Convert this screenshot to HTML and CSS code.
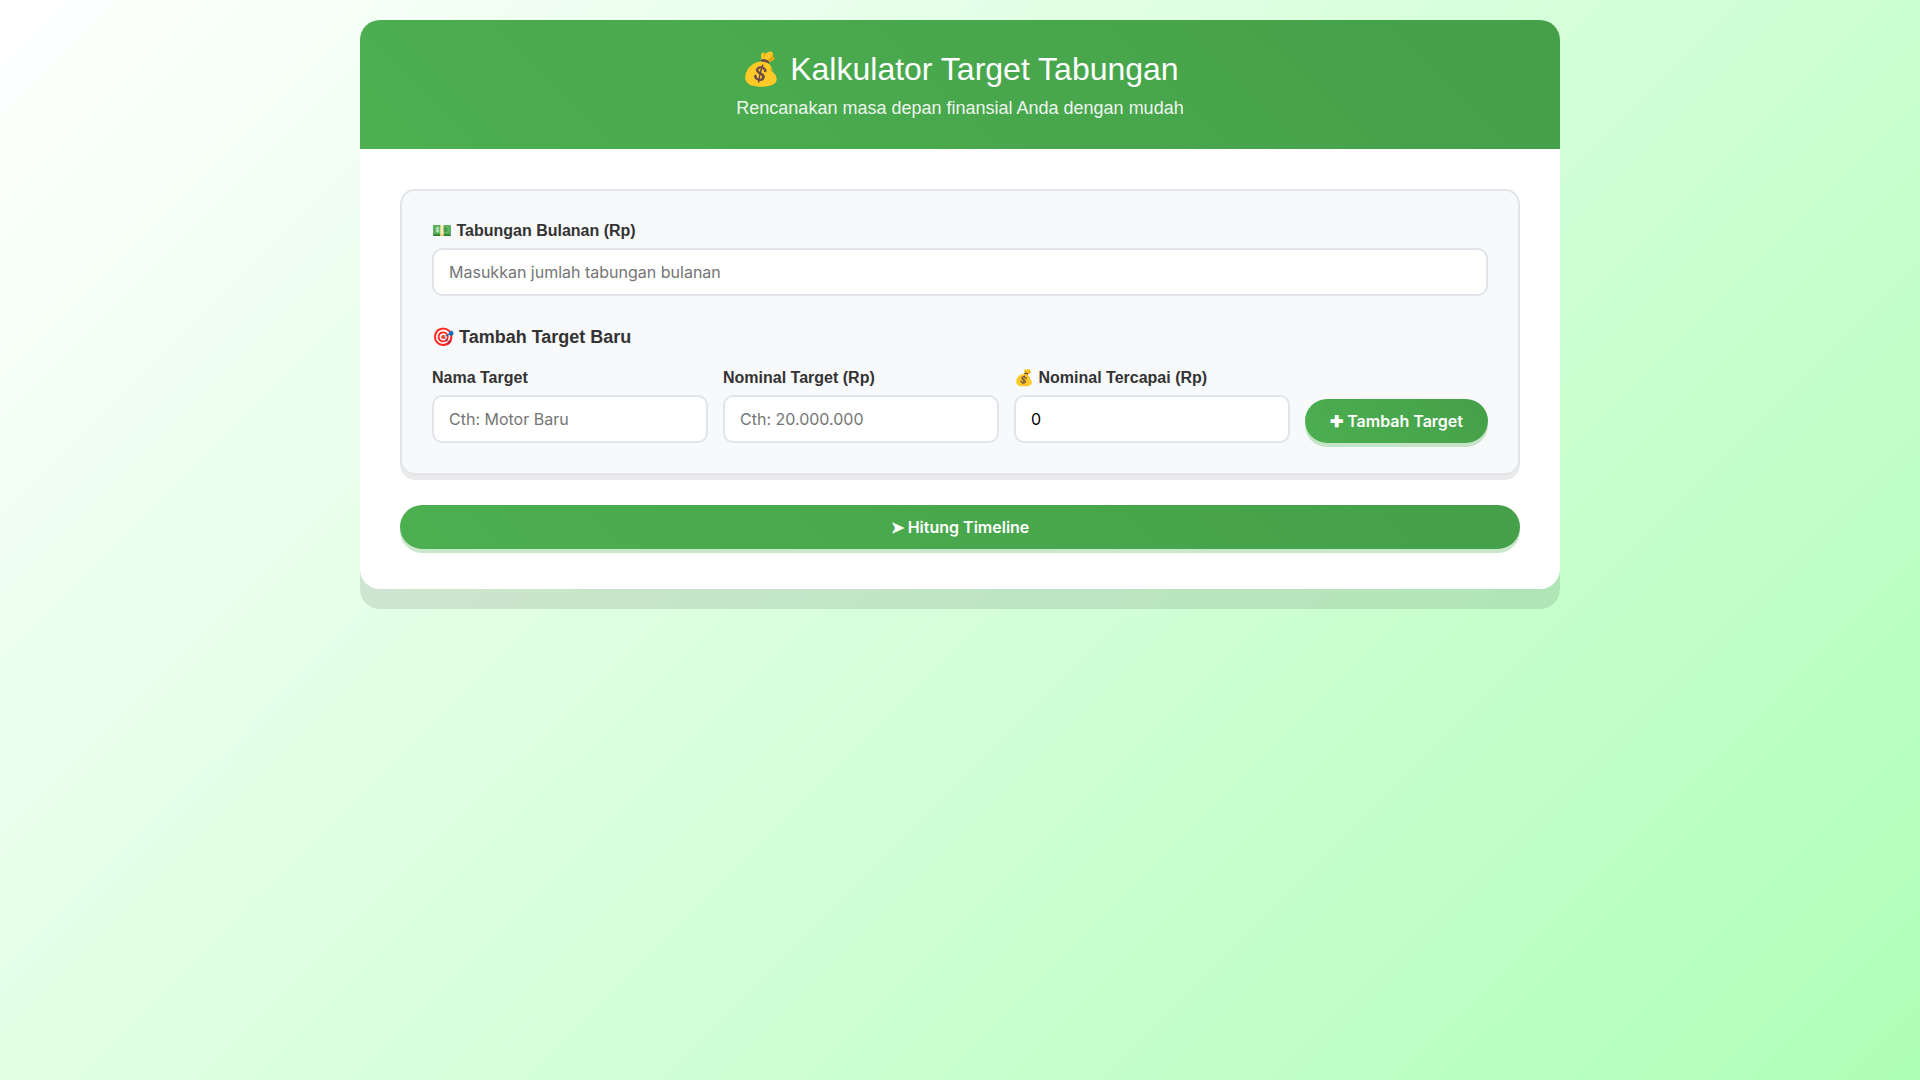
FILE: index.html
```html
<!DOCTYPE html>
<html lang="id">
<head>
<meta charset="UTF-8">
<meta name="viewport" content="width=device-width, initial-scale=1">
<title>Kalkulator Target Tabungan</title>
<link rel="stylesheet" href="styles.css">
</head>
<body>
<main class="container">
  <header class="header">
    <h1 class="title">💰 Kalkulator Target Tabungan</h1>
    <p class="subtitle">Rencanakan masa depan finansial Anda dengan mudah</p>
  </header>
  <div class="content">
    <section class="panel">
      <div class="field">
        <label class="label" for="monthly">💵 Tabungan Bulanan (Rp)</label>
        <input class="input" type="text" id="monthly" placeholder="Masukkan jumlah tabungan bulanan">
      </div>
      <h2 class="section-title">🎯 Tambah Target Baru</h2>
      <div class="target-row">
        <div class="field">
          <label class="label" for="name">Nama Target</label>
          <input class="input" type="text" id="name" placeholder="Cth: Motor Baru">
        </div>
        <div class="field">
          <label class="label" for="amount">Nominal Target (Rp)</label>
          <input class="input" type="text" id="amount" placeholder="Cth: 20.000.000">
        </div>
        <div class="field">
          <label class="label" for="reached">💰 Nominal Tercapai (Rp)</label>
          <input class="input" type="text" id="reached" value="0">
        </div>
        <button class="button" type="button">✚ Tambah Target</button>
      </div>
    </section>
    <button class="button button-wide" type="button">➤ Hitung Timeline</button>
  </div>
</main>
</body>
</html>
```
FILE: styles.css
```css
* {
  box-sizing: border-box;
  margin: 0;
  padding: 0;
}

body {
  min-height: 100vh;
  padding: 20px;
  font-family: "Liberation Sans", Arial, sans-serif;
  color: #333;
  background: linear-gradient(135deg, #ffffff 0%, #aeffb7 100%);
}

.container {
  max-width: 1200px;
  margin: 0 auto;
  overflow: hidden;
  background: #fff;
  border-radius: 20px;
  box-shadow: 0 20px 0 rgba(0, 0, 0, 0.1);
}

.header {
  padding: 30px;
  text-align: center;
  color: #fff;
  background: linear-gradient(45deg, #4caf50, #45a049);
}

.title {
  margin-bottom: 10px;
  font-size: 32px;
  font-weight: 400;
}

.subtitle {
  font-size: 18px;
  opacity: 0.9;
}

.content {
  padding: 40px;
}

.panel {
  margin-bottom: 30px;
  padding: 30px;
  background: #f8f9fb;
  border: 2px solid #e1e5e9;
  border-radius: 15px;
  box-shadow: 0 5px 0 rgba(0, 0, 0, 0.08);
}

.label {
  display: block;
  margin-bottom: 8px;
  font-size: 16px;
  font-weight: 600;
}

.input {
  display: block;
  width: 100%;
  padding: 12px 15px;
  font-family: Inter, sans-serif;
  font-size: 16px;
  color: #000;
  background: #fff;
  border: 2px solid #e1e5e9;
  border-radius: 10px;
}

.input::placeholder {
  color: #757575;
}

.section-title {
  margin: 30px 0 20px;
  font-size: 18px;
  font-weight: 600;
}

.target-row {
  display: grid;
  grid-template-columns: 1fr 1fr 1fr auto;
  gap: 15px;
  align-items: end;
}

.button {
  padding: 12px 25px;
  font-family: Inter, sans-serif;
  font-size: 16px;
  font-weight: 600;
  color: #fff;
  background: linear-gradient(45deg, #4caf50, #45a049);
  border: none;
  border-radius: 25px;
  box-shadow: 0 4px 0 rgba(76, 175, 80, 0.3);
  cursor: pointer;
}

.button-wide {
  display: block;
  width: 100%;
}
```
